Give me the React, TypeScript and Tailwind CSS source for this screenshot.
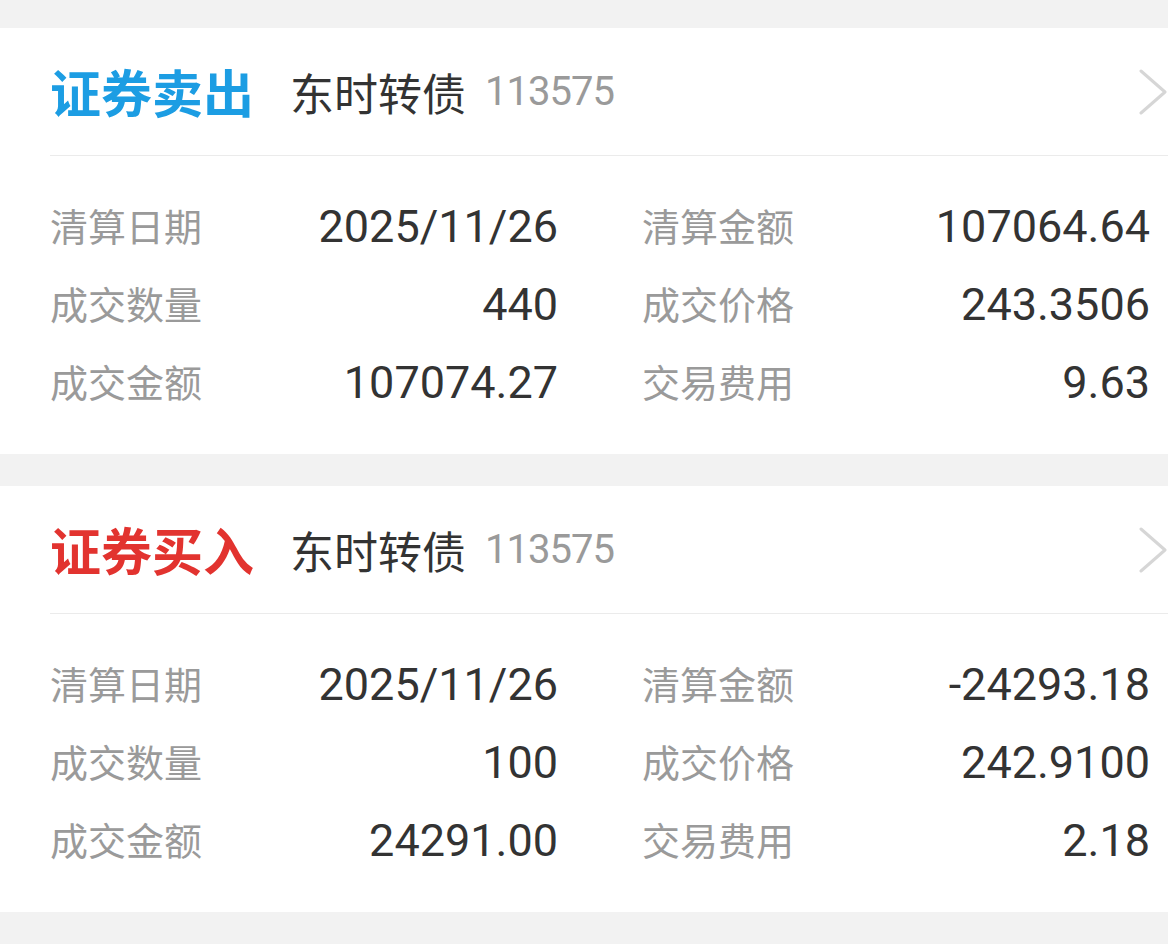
import React from 'react';

type Trade = {
  title: string;
  titleColor: string;
  name: string;
  code: string;
  rows: [string, string, string, string][];
};

const trades: Trade[] = [
  {
    title: '证券卖出',
    titleColor: 'text-[#1c9de3]',
    name: '东时转债',
    code: '113575',
    rows: [
      ['清算日期', '2025/11/26', '清算金额', '107064.64'],
      ['成交数量', '440', '成交价格', '243.3506'],
      ['成交金额', '107074.27', '交易费用', '9.63'],
    ],
  },
  {
    title: '证券买入',
    titleColor: 'text-[#e2332f]',
    name: '东时转债',
    code: '113575',
    rows: [
      ['清算日期', '2025/11/26', '清算金额', '-24293.18'],
      ['成交数量', '100', '成交价格', '242.9100'],
      ['成交金额', '24291.00', '交易费用', '2.18'],
    ],
  },
];

const cjk = "font-['Noto_Sans_CJK_SC','Noto_Sans',sans-serif]";
const num = "font-['Roboto','Noto_Sans_CJK_SC',sans-serif]";

const Cell: React.FC<{ label: string; value: string }> = ({ label, value }) => (
  <div className="flex items-center justify-between h-[78px]">
    <span className={`${cjk} text-[38px] leading-none text-[#9a9a9a]`}>{label}</span>
    <span className={`${num} text-[45px] leading-none text-[#333333] translate-y-[1px]`}>{value}</span>
  </div>
);

const TradeCard: React.FC<{ trade: Trade }> = ({ trade }) => (
  <div className="bg-white pl-[50px]">
    <div className="flex items-center h-[128px] border-b border-[#ebebeb]">
      <span className={`${cjk} text-[51px] font-bold leading-none ${trade.titleColor}`}>{trade.title}</span>
      <span className={`${cjk} text-[44px] leading-none text-[#333333] ml-[36px]`}>{trade.name}</span>
      <span className={`${num} text-[40px] leading-none tracking-[-1px] text-[#9a9a9a] ml-[19px]`}>{trade.code}</span>
      <svg className="ml-auto" width="30" height="46" viewBox="0 0 30 46" fill="none">
        <polyline points="3,2 27,23 3,44" stroke="#d6d6d6" strokeWidth="3" strokeLinecap="round" strokeLinejoin="round" />
      </svg>
    </div>
    <div className="pt-[30px] pb-[34px] pr-[18px]">
      {trade.rows.map(r => (
        <div key={r[0]} className="grid grid-cols-2 gap-x-[84px]">
          <Cell label={r[0]} value={r[1]} />
          <Cell label={r[2]} value={r[3]} />
        </div>
      ))}
    </div>
  </div>
);

export default function App() {
  return (
    <div className="min-h-screen bg-[#f2f2f2] pt-[28px] pb-[31px] flex flex-col gap-[32px]">
      {trades.map((t, i) => (
        <TradeCard key={i} trade={t} />
      ))}
    </div>
  );
}
